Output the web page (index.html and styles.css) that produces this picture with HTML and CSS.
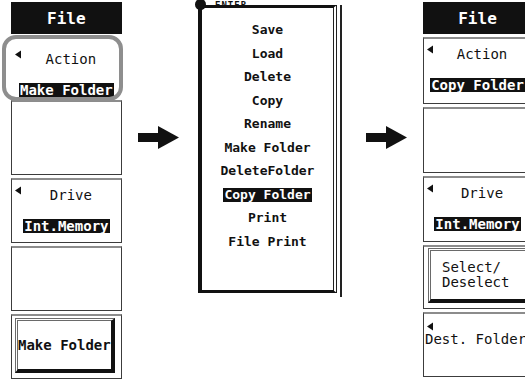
FILE: index.html
```html
<!DOCTYPE html>
<html>
<head>
<title>File - Copy Folder</title>
<meta charset="utf-8">
<link rel="stylesheet" href="styles.css">
</head>
<body>
<div class="stage">
	<!-- soft keys before: Action = Make Folder -->
	<div class="panel panel-before">
		<div class="panelhead">File</div>
		<div class="key key-framed">
			<div class="keyhead">
				<svg class="tri" viewBox="0 0 6 8"><polygon points="6,0 0,4 6,8"/></svg>
				<span class="keylabel">Action</span>
			</div>
			<div class="keyvalue"><span class="sel">Make Folder</span></div>
		</div>
		<div class="key"></div>
		<div class="key">
			<div class="keyhead">
				<svg class="tri" viewBox="0 0 6 8"><polygon points="6,0 0,4 6,8"/></svg>
				<span class="keylabel">Drive</span>
			</div>
			<div class="keyvalue"><span class="sel">Int.Memory</span></div>
		</div>
		<div class="key"></div>
		<div class="key key-button">
			<div class="bevel">Make Folder</div>
		</div>
		<div class="focusring"></div>
	</div>

	<svg class="arrow arrow-first" width="41" height="23" viewBox="0 0 41 23"><rect x="0" y="7" width="21" height="9"/><polygon points="20,0 41,11.5 20,23"/></svg>

	<!-- action menu -->
	<div class="menuwrap">
		<span class="enterdot"></span>
		<div class="menu">
			<div class="menuitem">Save</div>
			<div class="menuitem">Load</div>
			<div class="menuitem">Delete</div>
			<div class="menuitem">Copy</div>
			<div class="menuitem">Rename</div>
			<div class="menuitem">Make Folder</div>
			<div class="menuitem">DeleteFolder</div>
			<div class="menuitem"><span class="sel">Copy Folder</span></div>
			<div class="menuitem">Print</div>
			<div class="menuitem">File Print</div>
		</div>
		<div class="menuedge"></div>
		<span class="entertext">ENTER</span>
	</div>

	<svg class="arrow arrow-second" width="41" height="23" viewBox="0 0 41 23"><rect x="0" y="7" width="21" height="9"/><polygon points="20,0 41,11.5 20,23"/></svg>

	<!-- soft keys after: Action = Copy Folder -->
	<div class="panel panel-after">
		<div class="panelhead">File</div>
		<div class="key">
			<div class="keyhead">
				<svg class="tri" viewBox="0 0 6 8"><polygon points="6,0 0,4 6,8"/></svg>
				<span class="keylabel">Action</span>
			</div>
			<div class="keyvalue"><span class="sel">Copy Folder</span></div>
		</div>
		<div class="key"></div>
		<div class="key">
			<div class="keyhead">
				<svg class="tri" viewBox="0 0 6 8"><polygon points="6,0 0,4 6,8"/></svg>
				<span class="keylabel">Drive</span>
			</div>
			<div class="keyvalue"><span class="sel">Int.Memory</span></div>
		</div>
		<div class="key key-button key-select">
			<div class="bevel bevel-lines">
				<span>Select/</span>
				<span>Deselect</span>
			</div>
		</div>
		<div class="key key-dest">
			<div class="keyhead">
				<svg class="tri" viewBox="0 0 6 8"><polygon points="6,0 0,4 6,8"/></svg>
			</div>
			<div class="destlabel">Dest. Folder</div>
		</div>
	</div>
</div>
</body>
</html>
```

FILE: styles.css
```css
body {
	margin: 0;
	width: 525px;
	height: 380px;
	overflow: hidden;
	background: white;
	color: #111;
	font-family: "DejaVu Sans Mono", "Liberation Mono", monospace;
}
.stage {
	display: flex;
	align-items: flex-start;
}
.panel {
	position: relative;
	flex: none;
	width: 109px;
	margin-top: 2px;
	display: grid;
	grid-template-rows: 32px 67px 66px 66px 64px 65px;
	row-gap: 3px;
}
.panel-before {
	margin-left: 11px;
	grid-template-rows: 32px 60px 75px 65px 65px 65px;
}
.panel-after {
	margin-left: 16px;
}
.panelhead {
	background: #111;
	color: white;
	font-size: 16px;
	font-weight: bold;
	display: flex;
	align-items: center;
	justify-content: center;
}
.key {
	border: 1px solid #3c3c3c;
	border-top: 2px solid #8c8c8c;
	display: flex;
	flex-direction: column;
}
.key-framed {
	border-color: transparent;
	padding-top: 5px;
}
.keyhead {
	display: flex;
	align-items: flex-start;
	padding-top: 6px;
}
.tri {
	flex: none;
	width: 6px;
	height: 9px;
	margin-left: 3px;
	fill: #111;
}
.keylabel {
	flex: 1;
	text-align: center;
	font-size: 14px;
	line-height: 16px;
	margin-top: 1px;
}
.keyvalue {
	display: flex;
	justify-content: center;
	margin-top: 16px;
	font-size: 14px;
	font-weight: bold;
	white-space: nowrap;
}
.sel {
	display: inline-block;
	background: #111;
	color: white;
	height: 14px;
	line-height: 14px;
	padding: 0 1px;
	white-space: nowrap;
}
.key-button {
	padding: 2px 6px 5px 3px;
}
.key-select {
	padding: 1px 0 5px 4px;
}
.bevel {
	flex: 1;
	border-top: 3px double #6a6a6a;
	border-left: 3px double #6a6a6a;
	border-right: 4px solid #111;
	border-bottom: 4px solid #111;
	display: flex;
	align-items: center;
	justify-content: center;
	font-size: 14px;
	font-weight: bold;
	white-space: nowrap;
}
.bevel-lines {
	flex-direction: column;
	align-items: flex-start;
	padding-left: 11px;
	line-height: 15px;
	font-weight: normal;
}
.key-dest .keyhead {
	padding-top: 8px;
}
.destlabel {
	font-size: 14px;
	line-height: 16px;
	margin-left: 1px;
	white-space: nowrap;
}
.focusring {
	position: absolute;
	left: -9px;
	top: 33px;
	width: 121px;
	height: 66px;
	box-sizing: border-box;
	border: 4px solid #8e8e8e;
	border-radius: 14px;
}
.arrow {
	flex: none;
	margin-top: 126px;
	fill: #111;
}
.arrow-first {
	margin-left: 18px;
}
.arrow-second {
	margin-left: 24px;
}
.menuwrap {
	position: relative;
	flex: none;
	display: flex;
	align-items: flex-start;
	margin-left: 19px;
	margin-top: 5px;
}
.menu {
	width: 139px;
	height: 288px;
	box-sizing: border-box;
	border-left: 4px solid #111;
	border-top: 3px solid #111;
	border-bottom: 3px solid #111;
	border-right: 4px double #222;
	padding-top: 10px;
	text-align: center;
	font-size: 13px;
	font-weight: bold;
	line-height: 23.5px;
}
.menuitem {
	white-space: nowrap;
}
.menuedge {
	width: 2px;
	height: 292px;
	margin-left: 3px;
	background: #222;
}
.enterdot {
	position: absolute;
	left: -3px;
	top: -6px;
	width: 11px;
	height: 11px;
	border-radius: 50%;
	background: #111;
}
.entertext {
	position: absolute;
	left: 17px;
	top: -5px;
	font-size: 9px;
	font-weight: bold;
	line-height: 10px;
	letter-spacing: 1px;
}
```
